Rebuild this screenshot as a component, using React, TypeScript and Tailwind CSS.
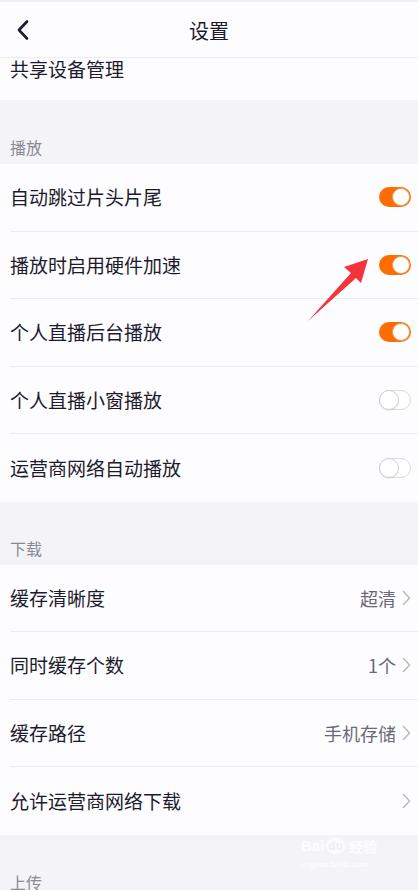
import React from "react";

const font = { fontFamily: '"Noto Sans CJK SC", "Noto Sans", sans-serif' };

function Toggle({ on }: { on: boolean }) {
  if (on) {
    return (
      <div className="relative w-[32px] h-[20px] rounded-full bg-[#ff6c00]">
        <div className="absolute right-[1px] top-[1px] w-[18px] h-[18px] rounded-full bg-white border border-[#e8a060]" />
      </div>
    );
  }
  return (
    <div className="relative w-[32px] h-[20px] rounded-full bg-white border border-[#dcdce0]">
      <div className="absolute left-[-1px] top-[-1px] w-[20px] h-[20px] rounded-full bg-white border border-[#d0d0d4] shadow-[0_1px_1px_rgba(0,0,0,0.08)]" />
    </div>
  );
}

function Chevron() {
  return (
    <svg width="9" height="16" viewBox="0 0 9 16" fill="none">
      <path d="M1.5 1.5 L7.5 8 L1.5 14.5" stroke="#b9b9c0" strokeWidth="1.5" strokeLinecap="round" strokeLinejoin="round" />
    </svg>
  );
}

function Row({ label, right, last }: { label: string; right: React.ReactNode; last?: boolean }) {
  return (
    <div className="h-[67.5px] bg-[#fdfcff] pl-[10px]">
      <div className={"h-full flex items-center justify-between pr-[7px] " + (last ? "" : "border-b border-[#ececf0]")}>
        <span className="text-[19px] leading-6 text-[#1c1b2b]">{label}</span>
        {right}
      </div>
    </div>
  );
}

function ValueRight({ value }: { value?: string }) {
  return (
    <div className="flex items-center gap-[6px]">
      {value && <span className="text-[18px] leading-6 text-[#6a6a76]">{value}</span>}
      <Chevron />
    </div>
  );
}

function Section({ title, h }: { title: string; h: string }) {
  return (
    <div className={"bg-[#f4f4f8] pl-[10px] flex items-end pb-[7px] " + h}>
      <span className="text-[16px] leading-5 text-[#8a8a96]">{title}</span>
    </div>
  );
}

export default function App() {
  return (
    <div className="relative w-[418px] h-[890px] overflow-hidden bg-[#f4f4f8]" style={font}>
      <div className="h-[2px] bg-[#f0f0f3]" />
      <div className="h-[56px] bg-[#fdfcff] border-b border-[#ededf0] flex items-center relative">
        <div className="absolute left-[16px] top-[17px]">
          <svg width="14" height="22" viewBox="0 0 14 22" fill="none">
            <path d="M11 2.5 L3 11 L11 19.5" stroke="#1c1b2b" strokeWidth="2.6" strokeLinecap="round" strokeLinejoin="round" />
          </svg>
        </div>
        <div className="flex-1 text-center text-[20px] leading-6 text-[#1c1b2b] pt-[2px]">设置</div>
      </div>
      <div className="h-[43px] bg-[#fdfcff] pl-[10px]">
        <span className="block text-[19px] leading-6 text-[#1c1b2b] -mt-[1px]">共享设备管理</span>
      </div>
      <Section title="播放" h="h-[64px]" />
      <Row label="自动跳过片头片尾" right={<Toggle on />} />
      <Row label="播放时启用硬件加速" right={<Toggle on />} />
      <Row label="个人直播后台播放" right={<Toggle on />} />
      <Row label="个人直播小窗播放" right={<Toggle on={false} />} />
      <Row label="运营商网络自动播放" right={<Toggle on={false} />} last />
      <Section title="下载" h="h-[63px]" />
      <Row label="缓存清晰度" right={<ValueRight value="超清" />} />
      <Row label="同时缓存个数" right={<ValueRight value="1个" />} />
      <Row label="缓存路径" right={<ValueRight value="手机存储" />} />
      <Row label="允许运营商网络下载" right={<ValueRight />} last />
      <div className="bg-[#f4f4f8] pl-[10px] pt-[35px]">
        <span className="text-[16px] leading-5 text-[#8a8a96]">上传</span>
      </div>

      {/* annotation arrow */}
      <svg className="absolute left-0 top-0 pointer-events-none" width="418" height="890" viewBox="0 0 418 890">
        <polygon points="368,259 344,267 351,273 308,321 356,278 361,283" fill="#f5333a" />
      </svg>

      {/* watermark */}
      <div className="absolute left-[301px] top-[838px] pointer-events-none flex flex-col items-start">
        <div className="flex items-end gap-[2px] text-white/80 font-bold" style={{ fontFamily: '"Liberation Sans", sans-serif' }}>
          <span className="text-[15px] leading-4">Bai</span>
          <span className="text-[12px] leading-4 bg-white/70 text-[#eeeef3] rounded-full px-[2px]">du</span>
          <span className="text-[14px] leading-4 ml-[2px]" style={font}>经验</span>
        </div>
        <span className="text-[9px] leading-3 text-white/80 mt-[4px]" style={{ fontFamily: '"Liberation Serif", serif' }}>jingyan.baidu.com</span>
      </div>
    </div>
  );
}
